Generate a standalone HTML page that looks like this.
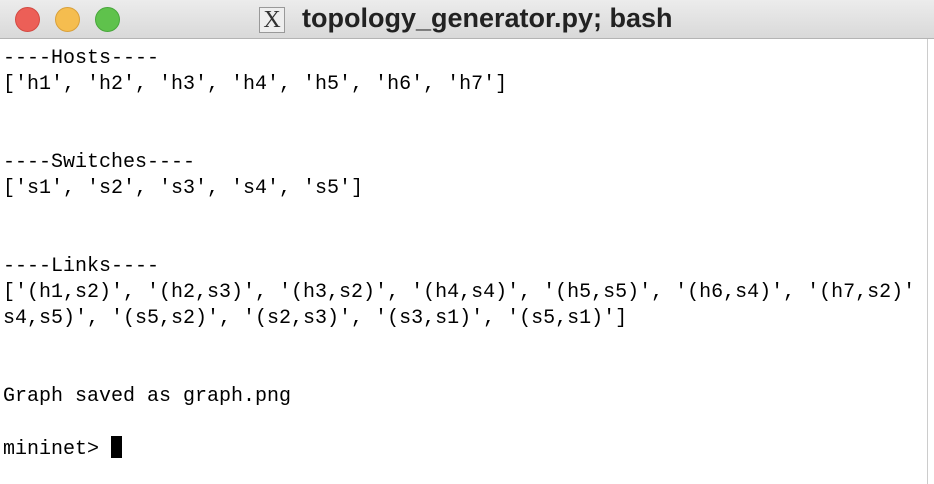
<!DOCTYPE html>
<html><head><meta charset="utf-8"><style>
html,body{margin:0;padding:0;width:934px;height:484px;overflow:hidden;background:#fff;}
.title{position:absolute;left:0;top:0;width:934px;height:38px;background:linear-gradient(#ececec,#d9d9d9);border-bottom:1px solid #b4b4b4;}
.dot{position:absolute;top:7px;width:23px;height:23px;border-radius:50%;}
.t{position:absolute;left:302px;top:3px;font:bold 27px "Liberation Sans",sans-serif;color:#222;white-space:nowrap;}
.x{position:absolute;left:259px;top:7px;width:24px;height:24px;border:1px solid #999;background:#eee;font:24px "Liberation Serif",serif;line-height:24px;text-align:center;color:#333;}
pre{position:absolute;left:3px;top:46px;margin:0;font:20px/26px "Liberation Mono",monospace;color:#000;white-space:pre;width:914px;overflow:hidden;}
.cur{display:inline-block;width:11px;height:22px;background:#000;vertical-align:-4px;}
.sb{position:absolute;right:0;top:39px;width:6px;height:445px;background:#fff;border-left:1px solid #ccc;}
</style></head><body>
<div class="title">
<div class="dot" style="left:15px;background:#ec5f57;border:1px solid #d34a42;"></div>
<div class="dot" style="left:55px;background:#f5bd4f;border:1px solid #d9a03a;"></div>
<div class="dot" style="left:95px;background:#5fc24c;border:1px solid #48a73b;"></div>
<div class="x">X</div>
<div class="t">topology_generator.py; bash</div>
</div>
<pre>----Hosts----
['h1', 'h2', 'h3', 'h4', 'h5', 'h6', 'h7']


----Switches----
['s1', 's2', 's3', 's4', 's5']


----Links----
['(h1,s2)', '(h2,s3)', '(h3,s2)', '(h4,s4)', '(h5,s5)', '(h6,s4)', '(h7,s2)'
s4,s5)', '(s5,s2)', '(s2,s3)', '(s3,s1)', '(s5,s1)']


Graph saved as graph.png

mininet&gt; <span class="cur"></span></pre>
<div class="sb"></div>
</body></html>
